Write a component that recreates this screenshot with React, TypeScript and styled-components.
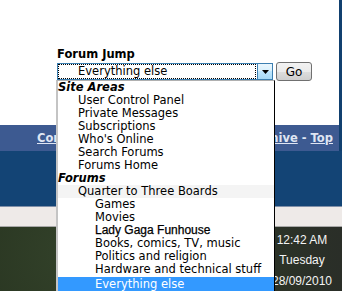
import React from "react";
import styled, { createGlobalStyle, css } from "styled-components";

const GlobalStyle = createGlobalStyle`
  html, body {
    margin: 0;
    padding: 0;
  }
  body {
    width: 342px;
    height: 291px;
    overflow: hidden;
    background: #ffffff;
    font-family: "DejaVu Sans", Verdana, sans-serif;
  }
`;

const Page = styled.div`
  display: flex;
  flex-direction: column;
  width: 342px;
  height: 291px;
  overflow: hidden;
`;

const Content = styled.div`
  height: 126px;
  box-sizing: border-box;
  padding: 46px 0 0 57px;
  border-right: 3px solid #11406f;
  background: #ffffff;
`;

const JumpBox = styled.div`
  display: flex;
  flex-direction: column;
  align-items: flex-start;
`;

const JumpLabel = styled.div`
  font-size: 11.5px;
  font-weight: bold;
  line-height: 16px;
  height: 16px;
  color: #000;
`;

const SelectRow = styled.div`
  display: flex;
  align-items: center;
  gap: 3px;
`;

const SelectWrap = styled.div`
  position: relative;
  width: 216px;
  height: 17px;
`;

const SelectBox = styled.div`
  display: flex;
  box-sizing: border-box;
  width: 100%;
  height: 100%;
  border: 1px solid #3c7fb1;
  background: #fff;
`;

const SelectValue = styled.div`
  flex: 1;
  margin: 0 1px 0 0;
  border: 1px dotted #000;
  box-sizing: border-box;
  padding-left: 19px;
  font-size: 11.5px;
  line-height: 13px;
  color: #000;
  white-space: pre;
`;

const ArrowButton = styled.div`
  width: 16px;
  box-sizing: border-box;
  margin: -1px -1px -1px 0;
  border: 1px solid #3c7fb1;
  background: linear-gradient(#eaf6fd 0%, #d9f0fc 45%, #bee6fd 50%, #a7d9f5 100%);
  display: flex;
  align-items: center;
  justify-content: center;
`;

const GoButton = styled.button`
  width: 36px;
  height: 19px;
  padding: 0;
  border: 1px solid #707070;
  border-radius: 3px;
  background: linear-gradient(#f2f2f2 0%, #ebebeb 50%, #dddddd 51%, #cfcfcf 100%);
  font-family: "DejaVu Sans", Verdana, sans-serif;
  font-size: 12px;
  color: #000;
`;

const DropList = styled.div`
  position: absolute;
  top: 100%;
  left: -1px;
  width: 219px;
  box-sizing: border-box;
  border-left: 2px solid #c4c4c4;
  border-right: 1px solid #000;
  border-top: 1px solid #b0b0b0;
  background: #fff;
  z-index: 5;
`;

const Option = styled.div<{ $level: number; $selected?: boolean; $hover?: boolean }>`
  height: 13px;
  line-height: 13px;
  font-size: 11.5px;
  white-space: nowrap;
  color: #000;
  padding-left: ${(p) => (p.$level === 0 ? 0 : p.$level === 1 ? 20 : 37)}px;
  ${(p) =>
    p.$level === 0 &&
    css`
      font-weight: bold;
      font-style: italic;
    `}
  ${(p) =>
    p.$hover &&
    css`
      background: #f4f4f4;
    `}
  ${(p) =>
    p.$selected &&
    css`
      margin-top: 1px;
      height: 14px;
      line-height: 14px;
      background: #3399ff;
      color: #fff;
    `}
`;

const PlainOption = styled(Option)`
  font-family: "Liberation Sans", Arial, sans-serif;
  font-size: 12px;
  font-weight: normal;
  color: #000;
  -webkit-text-stroke: 0.25px #000;
`;

const NavBar = styled.div`
  height: 26px;
  box-sizing: border-box;
  border-right: 3px solid #11406f;
  background: #3d5a91;
  display: flex;
  align-items: center;
  justify-content: space-between;
  padding: 0 6px 0 37px;
  font-size: 11.5px;
  font-weight: bold;
  color: #dfe5f3;
`;

const NavLink = styled.span`
  text-decoration: underline;
`;

const DarkBand = styled.div`
  height: 55px;
  background: #134475;
`;

const FooterBand = styled.div`
  height: 21px;
  box-sizing: border-box;
  border-top: 1px solid #7f8fa8;
  border-bottom: 1px solid #a8a8a8;
  background: #eeeae8;
`;

const Desktop = styled.div`
  flex: 1;
  display: flex;
`;

const Wallpaper = styled.div`
  flex: 1;
  background: radial-gradient(circle at 30% 40%, #33422a 0%, #2b3823 50%, #243020 100%);
`;

const Clock = styled.div`
  width: 80px;
  display: flex;
  flex-direction: column;
  align-items: center;
  padding-top: 3px;
  background: linear-gradient(90deg, #2c3327 0%, #2a2e28 100%);
  font-family: "Liberation Sans", Arial, sans-serif;
  font-size: 12px;
  line-height: 20.5px;
  color: #f4f4f4;
`;

type Item = { label: string; level: number; plain?: boolean; selected?: boolean; hover?: boolean };

const items: Item[] = [
  { label: "Site Areas", level: 0 },
  { label: "User Control Panel", level: 1 },
  { label: "Private Messages", level: 1 },
  { label: "Subscriptions", level: 1 },
  { label: "Who's Online", level: 1 },
  { label: "Search Forums", level: 1 },
  { label: "Forums Home", level: 1 },
  { label: "Forums", level: 0 },
  { label: "Quarter to Three Boards", level: 1, hover: true },
  { label: "Games", level: 2 },
  { label: "Movies", level: 2 },
  { label: "Lady Gaga Funhouse", level: 2, plain: true },
  { label: "Books, comics, TV, music", level: 2 },
  { label: "Politics and religion", level: 2 },
  { label: "Hardware and technical stuff", level: 2 },
  { label: "Everything else", level: 2, selected: true },
];

export default function App() {
  return (
    <Page>
      <GlobalStyle />
      <Content>
        <JumpBox>
          <JumpLabel>Forum Jump</JumpLabel>
          <SelectRow>
            <SelectWrap>
              <SelectBox>
                <SelectValue>Everything else</SelectValue>
                <ArrowButton>
                  <svg width="7" height="4" viewBox="0 0 7 4">
                    <path d="M0 0h7L3.5 4z" fill="#000" />
                  </svg>
                </ArrowButton>
              </SelectBox>
              <DropList>
                {items.map((it) =>
                  it.plain ? (
                    <PlainOption key={it.label} $level={it.level}>
                      {it.label}
                    </PlainOption>
                  ) : (
                    <Option key={it.label} $level={it.level} $selected={it.selected} $hover={it.hover}>
                      {it.label}
                    </Option>
                  )
                )}
              </DropList>
            </SelectWrap>
            <GoButton>Go</GoButton>
          </SelectRow>
        </JumpBox>
      </Content>
      <NavBar>
        <NavLink>Contact Us</NavLink>
        <span>
          <NavLink>Archive</NavLink> - <NavLink>Top</NavLink>
        </span>
      </NavBar>
      <DarkBand />
      <FooterBand />
      <Desktop>
        <Wallpaper />
        <Clock>
          <div>12:42 AM</div>
          <div>Tuesday</div>
          <div>28/09/2010</div>
        </Clock>
      </Desktop>
    </Page>
  );
}
